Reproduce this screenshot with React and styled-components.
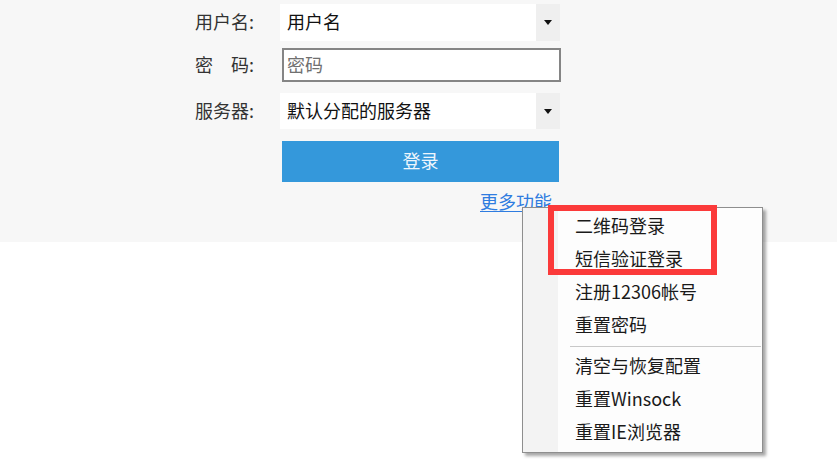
import React from 'react';
import styled, { createGlobalStyle } from 'styled-components';

const Global = createGlobalStyle`
  html, body {
    margin: 0;
    padding: 0;
    background: #ffffff;
    font-family: "Noto Sans CJK SC", "Noto Sans", sans-serif;
  }
`;

const Page = styled.div`
  position: relative;
  width: 837px;
  height: 459px;
  overflow: hidden;
  background: #ffffff;
`;

const Panel = styled.div`
  background: #f7f7f7;
  height: 242px;
  padding: 4px 0 0 195px;
  box-sizing: border-box;
`;

const Form = styled.div`
  display: flex;
  flex-direction: column;
  width: 366px;
`;

const Row = styled.div`
  display: flex;
  align-items: center;
  height: ${p => p.h}px;
  margin-bottom: ${p => p.gap || 0}px;
`;

const Label = styled.div`
  width: 85px;
  font-size: 18px;
  color: #333333;
  white-space: pre;
  padding-bottom: 3px;
`;

const Field = styled.div`
  display: flex;
  align-items: stretch;
  width: 279px;
  height: 100%;
  box-sizing: border-box;
  background: #ffffff;
  border: ${p => (p.boxed ? '2px solid #858585' : 'none')};
  margin-left: ${p => (p.boxed ? 2 : 0)}px;
`;

const Value = styled.div`
  flex: 1;
  display: flex;
  align-items: center;
  padding: 0 0 3px ${p => (p.boxed ? 3 : 7)}px;
  font-size: 18px;
  color: ${p => (p.placeholder ? '#707070' : '#111111')};
`;

const DropButton = styled.div`
  width: 24px;
  background: #efefef;
  display: flex;
  align-items: center;
  justify-content: center;
  margin-right: -1px;
`;

const Arrow = styled.span`
  width: 0;
  height: 0;
  border-left: 4px solid transparent;
  border-right: 4px solid transparent;
  border-top: 5px solid #111111;
`;

const LoginButton = styled.div`
  margin-left: 87px;
  width: 277px;
  height: 41px;
  box-sizing: border-box;
  padding-bottom: 3px;
  background: #3498db;
  color: #eef6fd;
  font-size: 18px;
  display: flex;
  align-items: center;
  justify-content: center;
`;

const MoreLink = styled.a`
  align-self: flex-start;
  margin: 7px 0 0 285px;
  font-size: 18px;
  line-height: 24px;
  color: #2f7ce0;
  text-decoration: underline;
  text-underline-offset: 2px;
`;

const Menu = styled.div`
  position: absolute;
  left: 522px;
  top: 207px;
  width: 241px;
  height: 246px;
  box-sizing: border-box;
  border: 1px solid #8e8e8e;
  background: linear-gradient(to right, #f3f3f3 0, #f3f3f3 35px, #fdfdfd 35px);
  box-shadow: 3px 3px 3px rgba(0, 0, 0, 0.35);
  padding: 1px 0 0;
  display: flex;
  flex-direction: column;
`;

const Item = styled.div`
  height: 33px;
  box-sizing: border-box;
  display: flex;
  align-items: center;
  padding: 0 0 2px 52px;
  font-size: 18px;
  color: #1a1a1a;
`;

const Separator = styled.div`
  height: 1px;
  background: #c8c8c8;
  margin: 5px 1px 2px 47px;
`;

const Highlight = styled.div`
  position: absolute;
  left: 548px;
  top: 205px;
  width: 169px;
  height: 70px;
  box-sizing: border-box;
  border: 6px solid #fb3a3a;
`;

const Select = ({ children }) => (
  <Field>
    <Value>{children}</Value>
    <DropButton>
      <Arrow />
    </DropButton>
  </Field>
);

const App = () => {
  const top = ['二维码登录', '短信验证登录', '注册12306帐号', '重置密码'];
  const bottom = ['清空与恢复配置', '重置Winsock', '重置IE浏览器'];

  return (
    <Page>
      <Global />
      <Panel>
        <Form>
          <Row h={37} gap={7}>
            <Label>用户名:</Label>
            <Select>用户名</Select>
          </Row>
          <Row h={34} gap={11}>
            <Label>{'密\u3000码:'}</Label>
            <Field boxed>
              <Value boxed placeholder="1">密码</Value>
            </Field>
          </Row>
          <Row h={36} gap={12}>
            <Label>服务器:</Label>
            <Select>默认分配的服务器</Select>
          </Row>
          <LoginButton>登录</LoginButton>
          <MoreLink>更多功能</MoreLink>
        </Form>
      </Panel>

      <Menu>
        {top.map(t => (
          <Item key={t}>{t}</Item>
        ))}
        <Separator />
        {bottom.map(t => (
          <Item key={t}>{t}</Item>
        ))}
      </Menu>
      <Highlight />
    </Page>
  );
};

export default App;
